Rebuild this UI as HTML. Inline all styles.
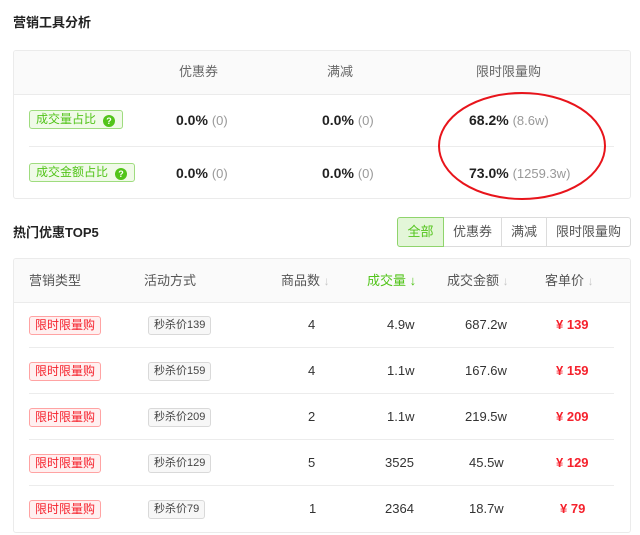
<!DOCTYPE html><html><head><meta charset="utf-8"><style>
*{margin:0;padding:0;box-sizing:border-box}
body{width:640px;height:535px;background:#fff;font-family:"Liberation Sans","Noto Sans CJK SC",sans-serif;color:#333;position:relative;overflow:hidden}
.a{position:absolute;white-space:nowrap;line-height:18px}
.card{position:absolute;left:13px;width:618px;border:1px solid #ebebeb;border-radius:3px;overflow:hidden}
.hd{background:#fafafa;border-bottom:1px solid #ebebeb}
.gt{position:absolute;white-space:nowrap;height:19px;line-height:17px;font-size:12px;color:#52c41a;background:#f0fae8;border:1px solid #9fdc7f;border-radius:3px;padding:0 7px 0 6px}
.q{display:inline-block;width:12px;height:12px;border-radius:50%;background:#52c41a;color:#fff;font-size:9px;line-height:12px;text-align:center;font-weight:bold;vertical-align:-1px;margin-left:7px}
.v{font-size:14px;font-weight:bold;color:#222}
.v span{font-weight:normal;color:#999;font-size:13px}
.rt{position:absolute;white-space:nowrap;left:29px;height:19px;line-height:17px;font-size:12px;color:#f5222d;background:#fff0f0;border:1px solid #ffa3a3;border-radius:3px;padding:0 5px}
.pt{position:absolute;white-space:nowrap;left:148px;height:19px;line-height:17px;font-size:11px;color:#444;background:#f7f7f7;border:1px solid #d9d9d9;border-radius:3px;padding:0 5px}
.n{font-size:13px;color:#333}
.p{font-size:13px;color:#f5222d;font-weight:bold}
.line{position:absolute;left:29px;width:585px;height:1px;background:#ececec}
.btn{position:absolute;top:217px;height:30px;line-height:28px;font-size:13px;color:#555;border:1px solid #dcdcdc;text-align:center;background:#fff}
.arr{color:#c8c8c8;font-size:12px}
</style></head><body>
<div class="a" style="left:13px;top:14px;font-size:13px;font-weight:bold;color:#222">营销工具分析</div>
<div class="card" style="top:50px;height:149px">
<div class="hd" style="height:44px"></div>
</div>
<div class="a" style="left:179px;top:63px;font-size:13px;color:#666">优惠券</div>
<div class="a" style="left:327px;top:63px;font-size:13px;color:#666">满减</div>
<div class="a" style="left:476px;top:63px;font-size:13px;color:#666">限时限量购</div>
<div class="gt" style="left:29px;top:110px">成交量占比<span class="q">?</span></div>
<div class="line" style="top:146px"></div>
<div class="gt" style="left:29px;top:163px">成交金额占比<span class="q">?</span></div>
<div class="a v" style="left:176px;top:111px">0.0% <span>(0)</span></div>
<div class="a v" style="left:322px;top:111px">0.0% <span>(0)</span></div>
<div class="a v" style="left:469px;top:111px">68.2% <span>(8.6w)</span></div>
<div class="a v" style="left:176px;top:164px">0.0% <span>(0)</span></div>
<div class="a v" style="left:322px;top:164px">0.0% <span>(0)</span></div>
<div class="a v" style="left:469px;top:164px">73.0% <span>(1259.3w)</span></div>
<svg class="a" style="left:0;top:0" width="640" height="535"><ellipse cx="522" cy="146" rx="83" ry="53" fill="none" stroke="#e8141b" stroke-width="2"/></svg>
<div class="a" style="left:13px;top:224px;font-size:13px;font-weight:bold;color:#222">热门优惠TOP5</div>
<div class="btn" style="left:443px;width:59px">优惠券</div>
<div class="btn" style="left:501px;width:46px">满减</div>
<div class="btn" style="left:546px;width:85px;border-radius:0 3px 3px 0">限时限量购</div>
<div class="btn" style="left:397px;width:47px;background:#e3f6d8;border-color:#8fd46c;color:#52c41a;border-radius:3px 0 0 3px">全部</div>
<div class="card" style="top:258px;height:275px"><div class="hd" style="height:44px"></div></div>
<div class="a" style="left:29px;top:272px;font-size:13px;color:#555">营销类型</div>
<div class="a" style="left:144px;top:272px;font-size:13px;color:#555">活动方式</div>
<div class="a" style="left:281px;top:272px;font-size:13px;color:#555">商品数 <span class="arr">↓</span></div>
<div class="a" style="left:367px;top:272px;font-size:13px;color:#52c41a">成交量 <span style="font-weight:bold">↓</span></div>
<div class="a" style="left:447px;top:272px;font-size:13px;color:#555">成交金额 <span class="arr">↓</span></div>
<div class="a" style="left:545px;top:272px;font-size:13px;color:#555">客单价 <span class="arr">↓</span></div>

<div class="rt" style="top:316px">限时限量购</div><div class="pt" style="top:316px">秒杀价139</div>
<div class="a n" style="left:308px;top:316px">4</div><div class="a n" style="left:387px;top:316px">4.9w</div><div class="a n" style="left:465px;top:316px">687.2w</div><div class="a p" style="left:556px;top:316px">¥ 139</div>
<div class="line" style="top:347px"></div>
<div class="rt" style="top:362px">限时限量购</div><div class="pt" style="top:362px">秒杀价159</div>
<div class="a n" style="left:308px;top:362px">4</div><div class="a n" style="left:387px;top:362px">1.1w</div><div class="a n" style="left:465px;top:362px">167.6w</div><div class="a p" style="left:556px;top:362px">¥ 159</div>
<div class="line" style="top:393px"></div>
<div class="rt" style="top:408px">限时限量购</div><div class="pt" style="top:408px">秒杀价209</div>
<div class="a n" style="left:308px;top:408px">2</div><div class="a n" style="left:387px;top:408px">1.1w</div><div class="a n" style="left:465px;top:408px">219.5w</div><div class="a p" style="left:556px;top:408px">¥ 209</div>
<div class="line" style="top:439px"></div>
<div class="rt" style="top:454px">限时限量购</div><div class="pt" style="top:454px">秒杀价129</div>
<div class="a n" style="left:308px;top:454px">5</div><div class="a n" style="left:385px;top:454px">3525</div><div class="a n" style="left:469px;top:454px">45.5w</div><div class="a p" style="left:556px;top:454px">¥ 129</div>
<div class="line" style="top:485px"></div>
<div class="rt" style="top:500px">限时限量购</div><div class="pt" style="top:500px">秒杀价79</div>
<div class="a n" style="left:309px;top:500px">1</div><div class="a n" style="left:385px;top:500px">2364</div><div class="a n" style="left:469px;top:500px">18.7w</div><div class="a p" style="left:560px;top:500px">¥ 79</div>
</body></html>
